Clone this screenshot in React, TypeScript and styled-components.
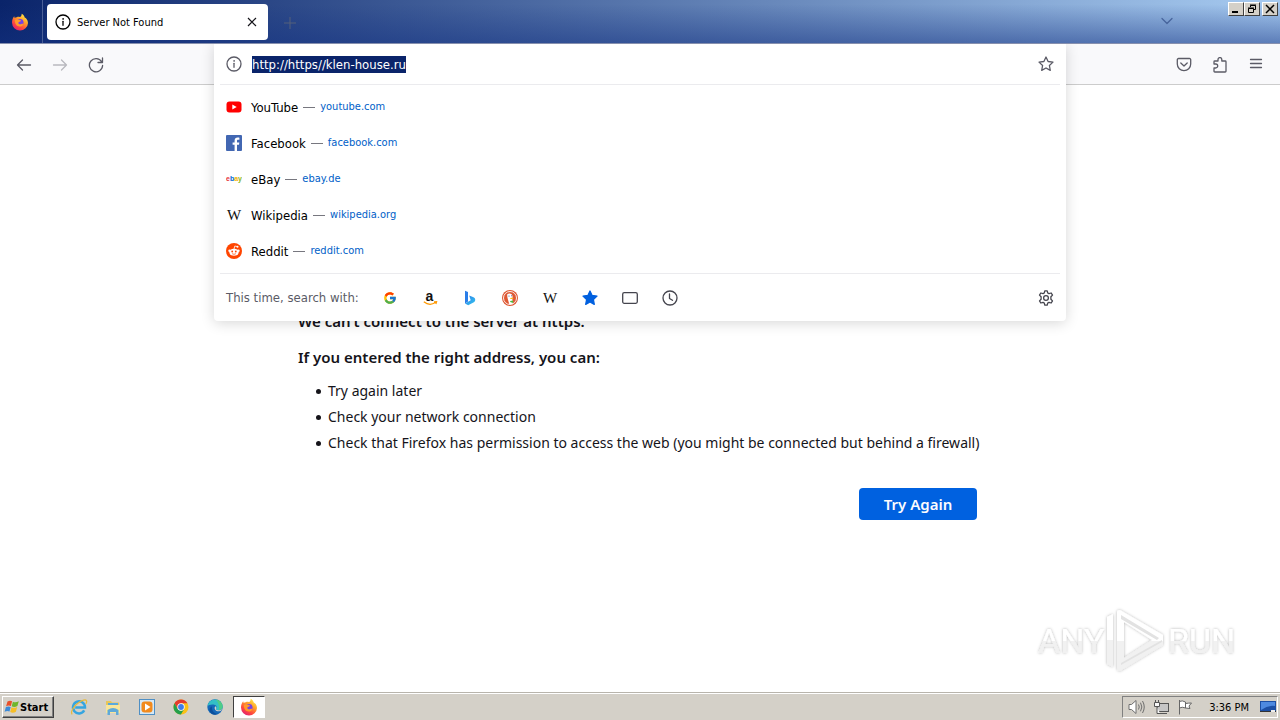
import React, { useEffect, useRef } from 'react';
import styled, { createGlobalStyle } from 'styled-components';
import { FcGoogle } from 'react-icons/fc';

const uiFont = '"DejaVu Sans Condensed", "Noto Sans", sans-serif';
const pageFont = '"Noto Sans", "Open Sans", sans-serif';

const GlobalStyle = createGlobalStyle`
  *, *::before, *::after { box-sizing: border-box; }
  body { margin: 0; background: #fff; font-family: ${uiFont}; color: #15141a; }
  button, input { font-family: inherit; }
  svg { display: block; flex: none; }
  h1, h2, p, ul { margin: 0; padding: 0; font-weight: 400; }
`;

const Screen = styled.div`
  min-height: 100vh;
  display: flex;
  flex-direction: column;
`;

const TitleBar = styled.header`
  height: 44px;
  display: flex;
  align-items: flex-start;
  border-bottom: 1px solid #8790ae;
  background:
    linear-gradient(to bottom, rgba(10, 36, 106, 0) 10%, rgba(20, 50, 130, 0.5) 100%),
    linear-gradient(to right, #0a246a 0%, #a6caf0 100%);
`;

const FirefoxView = styled.button`
  width: 43px;
  height: 43px;
  padding: 0 3px 0 0;
  border: 0;
  border-right: 1px solid #4a5f97;
  background: none;
  display: grid;
  place-items: center;
`;

const Tab = styled.div`
  width: 221px;
  height: 36px;
  margin: 4px 0 0 4px;
  padding: 0 8px;
  border-radius: 4px;
  background: #fff;
  display: flex;
  align-items: center;
  gap: 6px;
  font-size: 11px;
  color: #000;
`;

const TabTitle = styled.span`
  flex: 1;
`;

const PlainButton = styled.button<{ $size: number }>`
  width: ${(p) => p.$size}px;
  height: ${(p) => p.$size}px;
  padding: 0;
  border: 0;
  background: none;
  color: #5b5b66;
  display: grid;
  place-items: center;
  flex: none;
`;

const NewTab = styled(PlainButton)`
  margin: 6px auto 0 5px;
`;

const TabList = styled(PlainButton)`
  margin: 5px 45px 0 0;
  color: #48659c;
`;

const WindowButtons = styled.div`
  display: flex;
  padding: 2px 2px 0 0;
`;

const WindowButton = styled.button<{ $gap?: boolean }>`
  width: 16px;
  height: 14px;
  margin-left: ${(p) => (p.$gap ? 2 : 0)}px;
  padding: 0;
  border: 1px solid;
  border-color: #fff #404040 #404040 #fff;
  background: #d4d0c8;
  display: grid;
  place-items: center;
`;

const Toolbar = styled.div`
  height: 41px;
  display: grid;
  grid-template-columns: 214px 1fr 214px;
  background: #f9f9fb;
  border-bottom: 1px solid #ccc;
`;

const ToolGroup = styled.div<{ $end?: boolean }>`
  display: flex;
  align-items: center;
  justify-content: ${(p) => (p.$end ? 'flex-end' : 'flex-start')};
  gap: 4px;
  padding: 1px 8px 0;
`;

const AddressArea = styled.div`
  position: relative;
`;

const AddressPanel = styled.div`
  position: absolute;
  z-index: 2;
  top: 0;
  left: 0;
  right: 0;
  padding: 0 6px;
  border-radius: 0 0 4px 4px;
  background: #fff;
  box-shadow: 0 2px 14px rgba(0, 0, 0, 0.16);
  clip-path: inset(0 -20px -20px -20px);
`;

const AddressRow = styled.form`
  height: 41px;
  padding: 0 6px;
  display: flex;
  align-items: center;
  gap: 10px;
  border-bottom: 1px solid #ebebee;
  color: #5b5b66;
`;

const AddressInput = styled.input`
  flex: 1;
  min-width: 0;
  height: 17px;
  padding: 0;
  border: 0;
  outline: 0;
  background: none;
  font-size: 13px;
  line-height: 17px;
  color: #15141a;
  &::selection { background: #0a246a; color: #fff; }
`;

const Suggestions = styled.ul`
  list-style: none;
  && { padding: 4px 0; }
`;

const Suggestion = styled.li`
  height: 36px;
  padding: 0 6px;
  display: flex;
  align-items: center;
`;

const SiteIcon = styled.span`
  width: 16px;
  margin-right: 9px;
`;

const SiteLink = styled.a`
  display: flex;
  align-items: center;
  gap: 5px;
  font-size: 13px;
  color: #000;
  text-decoration: none;
`;

const Dash = styled.span`
  width: 12px;
  height: 1px;
  background: #77777f;
`;

const SiteUrl = styled.span`
  font-size: 11px;
  line-height: 16px;
  color: #0060c8;
`;

const EngineBar = styled.div`
  height: 48px;
  padding: 0 0 0 6px;
  display: flex;
  align-items: center;
  border-top: 1px solid #ebebee;
`;

const EngineLabel = styled.span`
  width: 144px;
  font-size: 13px;
  color: #5b5b66;
  white-space: nowrap;
`;

const EngineButton = styled(PlainButton)`
  color: #45454e;
`;

const SettingsButton = styled(PlainButton)`
  margin-left: auto;
  color: #45454e;
`;

const Content = styled.main`
  flex: 1;
  position: relative;
  padding: 224px 16px 0;
  font-family: ${pageFont};
`;

const ErrorBlock = styled.section`
  max-width: 684px;
  margin: 0 auto;
  display: flex;
  flex-direction: column;
`;

const Lead = styled.p`
  && { font-weight: 600; }
  font-size: 15px;
  line-height: 24px;
  margin-bottom: 12px;
`;

const Tips = styled.ul`
  && { margin-top: -3px; padding-left: 18px; }
  list-style: none;
  font-size: 14px;
  line-height: 26px;
`;

const Tip = styled.li`
  display: flex;
  align-items: center;
  gap: 7px;
  white-space: nowrap;
  &::before {
    content: '';
    width: 5px;
    height: 5px;
    border-radius: 50%;
    background: #15141a;
  }
`;

const TryAgain = styled.button`
  width: 118px;
  height: 32px;
  margin: 32px 5px 0 auto;
  padding: 0;
  border: 0;
  border-radius: 4px;
  background: #0061e0;
  color: #fbfbfe;
  font-size: 15px;
  font-weight: 600;
`;

const Watermark = styled.div`
  position: absolute;
  right: 40px;
  bottom: 16px;
`;

const Taskbar = styled.footer`
  height: 28px;
  padding: 1px 2px 0;
  border-top: 1px solid #b8b4ac;
  box-shadow: inset 0 1px #fff;
  background: #d4d0c8;
  display: flex;
  align-items: center;
`;

const StartButton = styled.button`
  width: 52px;
  height: 22px;
  padding: 0 0 0 1px;
  border: 1px solid;
  border-color: #fff #404040 #404040 #fff;
  box-shadow: inset -1px -1px #808080;
  background: #d4d0c8;
  color: #000;
  display: flex;
  align-items: center;
  font-size: 11px;
  font-weight: 700;
`;

const QuickLaunch = styled.nav`
  display: flex;
  gap: 2px;
  padding-left: 9px;
`;

const TaskButton = styled.button<{ $active?: boolean }>`
  width: 32px;
  height: 22px;
  padding: 0;
  border: 1px solid;
  border-color: ${(p) => (p.$active ? '#404040 #fff #fff #404040' : 'transparent')};
  background: ${(p) => (p.$active ? '#fff' : 'none')};
  display: grid;
  place-items: center;
`;

const Tray = styled.div`
  height: 22px;
  margin-left: auto;
  padding: 0 1px 0 5px;
  border: 1px solid;
  border-color: #808080 #fff #fff #808080;
  display: flex;
  align-items: center;
  gap: 8px;
  font-size: 11px;
  color: #000;
`;

const Clock = styled.time`
  margin: 0 3px 0 8px;
  white-space: nowrap;
`;

const stroke = { fill: 'none', stroke: 'currentColor', strokeWidth: 1.3, strokeLinecap: 'round', strokeLinejoin: 'round' } as const;

const InfoIcon = () => (
  <svg width="16" height="16" viewBox="0 0 16 16" {...stroke}>
    <circle cx="8" cy="8" r="7" />
    <path d="M8 7.3v4" />
    <circle cx="8" cy="4.9" r=".5" fill="currentColor" strokeWidth=".6" />
  </svg>
);

const Firefox = ({ size = 18 }: { size?: number }) => (
  <svg width={size} height={size} viewBox="0 0 18 18">
    <defs>
      <linearGradient id="ffBody" x1=".85" y1=".05" x2=".25" y2="1">
        <stop offset="0" stopColor="#fff04f" />
        <stop offset=".35" stopColor="#ffa52a" />
        <stop offset=".7" stopColor="#ff4a3d" />
        <stop offset="1" stopColor="#e01e73" />
      </linearGradient>
    </defs>
    <path fill="url(#ffBody)" d="M10.6.7c2 1 2.8 2.500 3.100 3.700 1 .2 3.300 2.400 3.300 5.500A8 8 0 0 1 9 17.500 8 8 0 0 1 1 9.600C1 7 1.900 4.700 3.200 3.300l.5 1.600c.6-.5 1.400-.7 2.200-.6C7.100 3.200 8.500 4.300 9.200 3.900 10.300 3.200 10.800 2 10.600.7z" />
    <circle cx="9.100" cy="9.300" r="3.400" fill="#7542e5" />
    <path fill="#ff9a2b" d="M3.900 6.900c1.400-1.200 3.300-.8 4.600 0 1.300.1 1.800.5 1.400 1.100-.6.700-2.200.5-2.500 1.500-.2 1.600 1.600 2.300 3 1.600 1.300-.6 2 .1 1.500.8-1.400 2-5.200 2.300-6.900-.4-.9-1.400-1.300-3.100-1.100-4.600z" />
  </svg>
);

const YouTube = () => (
  <svg width="16" height="16" viewBox="0 0 16 16">
    <rect x=".5" y="2.500" width="15" height="11" rx="3" fill="#f00" />
    <path fill="#fff" d="M6.300 5.500v5L10.700 8z" />
  </svg>
);

const Facebook = () => (
  <svg width="16" height="16" viewBox="0 0 16 16">
    <rect width="16" height="16" rx="1" fill="#4267b2" />
    <path fill="#fff" d="M8.600 16V9.800H6.600V7.400h2V5.700c0-2 1.200-3.100 3-3.100.9 0 1.600.1 1.800.1v2.100h-1.200c-1 0-1.200.5-1.200 1.100v1.500h2.300l-.3 2.400h-2V16z" />
  </svg>
);

const Ebay = () => (
  <svg width="16" height="16" viewBox="0 0 16 16" fontFamily="Liberation Sans, sans-serif" fontSize="7" fontWeight="700">
    <text x="0" y="10">
      <tspan fill="#e53238">e</tspan><tspan fill="#0064d2">b</tspan><tspan fill="#f5af02">a</tspan><tspan fill="#86b817">y</tspan>
    </text>
  </svg>
);

const Wikipedia = () => (
  <svg width="16" height="16" viewBox="0 0 16 16">
    <text x="8" y="13" textAnchor="middle" fontFamily="Liberation Serif, serif" fontSize="15" fill="#111">W</text>
  </svg>
);

const Reddit = () => (
  <svg width="16" height="16" viewBox="0 0 16 16">
    <circle cx="8" cy="8" r="8" fill="#ff4500" />
    <path d="M8 6l.8-3 2.300.5" fill="none" stroke="#fff" strokeWidth=".8" />
    <circle cx="11.500" cy="3.700" r="1" fill="#fff" />
    <circle cx="3.600" cy="7.700" r="1.300" fill="#fff" />
    <circle cx="12.400" cy="7.700" r="1.300" fill="#fff" />
    <ellipse cx="8" cy="9.300" rx="4.600" ry="3.500" fill="#fff" />
    <circle cx="6.200" cy="8.500" r=".9" fill="#ff4500" />
    <circle cx="9.800" cy="8.500" r=".9" fill="#ff4500" />
    <path d="M6.100 10.700q1.900 1.200 3.800 0" fill="none" stroke="#ff4500" strokeWidth=".7" />
  </svg>
);

const Amazon = () => (
  <svg width="16" height="20" viewBox="0 -4 16 20">
    <text x="7.500" y="8.500" textAnchor="middle" fontFamily="Liberation Sans, sans-serif" fontSize="14" fontWeight="700" fill="#111">a</text>
    <path d="M1.800 9.800c3.600 2.900 8.300 2.900 11.600.8M12 9.800l2.600-.1-.7 2.300" fill="none" stroke="#f90" strokeWidth="1.200" />
  </svg>
);

const Bing = () => (
  <svg width="16" height="16" viewBox="0 0 16 16">
    <defs>
      <linearGradient id="bing" x1="0" y1="0" x2="1" y2="1">
        <stop offset="0" stopColor="#2b7be9" />
        <stop offset="1" stopColor="#35c6ee" />
      </linearGradient>
    </defs>
    <path fill="#2a7de8" d="M3 .8l3 1.100v9.600L3 13.600z" />
    <path fill="url(#bing)" d="M7.200 5.400l4.300 1.900c2.300 1.100 2.200 3.900.4 5L6.200 15.200 3 13.500l5.700-3.300z" />
  </svg>
);

const DuckDuckGo = () => (
  <svg width="16" height="16" viewBox="0 0 16 16">
    <circle cx="8" cy="8" r="8" fill="#de5833" />
    <circle cx="8" cy="8" r="6.500" fill="#de5833" stroke="#fff" strokeWidth=".9" />
    <path fill="#fff" d="M5.300 4.300C6.600 2.900 10 3 10.500 6.100c.2 1.700-.3 2.700 0 4.200l.7 3.300c-1.300.6-2.800.7-4 .3C6.600 11.200 4.700 6.900 5.300 4.300z" />
    <path fill="#fdb813" d="M8.300 8.100c1-.5 2.500-.5 3.300-.2-.5.8-2.100 1.100-3.300 1z" />
    <path fill="#4cba3c" d="M8.200 11l2.900-.6v2.500L8.200 12z" />
    <circle cx="7" cy="6" r=".6" fill="#2d4f8e" />
    <circle cx="9.500" cy="5.800" r=".5" fill="#2d4f8e" />
  </svg>
);

const starPath = 'M8 1l2.100 4.500 4.900.6-3.600 3.400.9 4.900L8 12l-4.300 2.400.9-4.900L1 6.100l4.900-.6z';

const Star = ({ filled }: { filled?: boolean }) => (
  <svg width="16" height="16" viewBox="0 0 16 16" {...stroke} {...(filled ? { fill: '#0060df', stroke: '#0060df' } : {})}>
    <path d={starPath} />
  </svg>
);

const TabsIcon = () => (
  <svg width="16" height="16" viewBox="0 0 16 16" {...stroke}><rect x=".7" y="2.700" width="14.600" height="10.600" rx="1.500" /></svg>
);

const HistoryIcon = () => (
  <svg width="16" height="16" viewBox="0 0 16 16" {...stroke}><circle cx="8" cy="8" r="7" /><path d="M7.500 4v4.500l3 1.800" /></svg>
);

const Gear = () => (
  <svg width="16" height="16" viewBox="0 0 16 16" {...stroke}>
    <circle cx="8" cy="8" r="2.400" />
    <path d="M6.800.8h2.400l.5 2.100 1.300.8 2.200-.7 1.300 2.100-1.600 1.700v2.400l1.600 1.700-1.300 2.100-2.200-.7-1.300.8-.5 2.100H6.800l-.5-2.100-1.300-.8-2.200.7-1.300-2.100 1.600-1.700V6.800L1.500 5.100 2.800 3l2.200.7 1.300-.8z" />
  </svg>
);

const Arrow = ({ forward }: { forward?: boolean }) => (
  <svg width="16" height="16" viewBox="0 0 16 16" {...stroke} opacity={forward ? 0.4 : 1}>
    <path d={forward ? 'M1.500 8h13M9.500 3L14.500 8l-5 5' : 'M14.500 8h-13M6.500 3L1.500 8l5 5'} />
  </svg>
);

const Reload = () => (
  <svg width="16" height="16" viewBox="0 0 16 16" {...stroke}>
    <path d="M13.600 4.700A6.600 6.600 0 1 0 14.600 8.500M14.500 1v4.500H10" />
  </svg>
);

const Pocket = () => (
  <svg width="16" height="16" viewBox="0 0 16 16" {...stroke}>
    <path d="M2.500 1.500h11a1.200 1.200 0 0 1 1.200 1.200V7a6.700 6.700 0 0 1-13.400 0V2.700A1.200 1.200 0 0 1 2.500 1.500zM4.800 6L8 9l3.200-3" />
  </svg>
);

const Puzzle = () => (
  <svg width="16" height="16" viewBox="0 0 16 16" {...stroke}>
    <path d="M2 7V4.800A.8.8 0 0 1 2.800 4H6V2.500a1.900 1.900 0 0 1 3.800 0V4h3.400a.8.8 0 0 1 .8.800v9.400a.8.8 0 0 1-.8.800H2.800a.8.8 0 0 1-.8-.8V11h1.700a2 2 0 0 0 0-4z" />
  </svg>
);

const Menu = () => (
  <svg width="16" height="16" viewBox="0 0 16 16" {...stroke}><path d="M2.500 2.500h11M2.500 6.500h11M2.500 10.500h11" /></svg>
);

const StartFlag = () => (
  <svg width="16" height="16" viewBox="0 0 16 16">
    <path fill="#e8502a" d="M3.500 2.500q2.500-1.500 4.600-.2L6.900 7Q4.500 6 2.100 7.300z" />
    <path fill="#6fb62c" d="M8.900 2.700q2.600 1.400 5.900-.5L13.400 7q-3 1.700-5.700.3z" />
    <path fill="#3b8ad8" d="M1.900 8.100q2.500-1.300 4.800-.2l-1.200 4.600q-2.300-1.200-4.900.3z" />
    <path fill="#f6be26" d="M7.500 8.200q2.600 1.400 5.700-.3l-1.300 4.800q-3 1.800-5.700.2z" />
  </svg>
);

const InternetExplorer = () => (
  <svg width="18" height="18" viewBox="0 0 18 18">
    <path d="M14.200 12.400A6 6 0 1 1 15 9.600H5.200" fill="none" stroke="#36a5e0" strokeWidth="2.500" />
    <path d="M2.200 16.300c-2.300-2.400 2.200-9 7-12 3-2 6.500-3.200 7.300-1.600.5 1-.1 2.300-.7 3.200" fill="none" stroke="#e8b93a" strokeWidth="1.200" />
  </svg>
);

const Explorer = () => (
  <svg width="18" height="18" viewBox="0 0 18 18">
    <path fill="#e8c659" d="M2 3h5l1 1.500h7V15H2z" />
    <path fill="#58a9de" d="M4 5h10v4H4z" />
    <path fill="#f8e59a" d="M2 7h14v8H2z" />
    <path fill="#5fa9d8" d="M3.500 12q5.500-4 11 0v5H12v-3H6v3H3.500z" />
  </svg>
);

const MediaPlayer = () => (
  <svg width="18" height="18" viewBox="0 0 18 18">
    <rect x="1.500" y="1.500" width="15" height="15" fill="#d6e8f5" stroke="#4f8fc4" />
    <rect x="3.500" y="3.500" width="11" height="11" rx="3" fill="#f28a1d" />
    <path fill="#fff" d="M7 5.500v7L12.500 9z" />
  </svg>
);

const Chrome = () => (
  <svg width="18" height="18" viewBox="0 0 18 18">
    <circle cx="9" cy="9" r="7.500" fill="#fbc116" />
    <path fill="#e33b2e" d="M2.500 5.200A7.500 7.500 0 0 1 15.500 5.300H9L5.800 10.900z" />
    <path fill="#249f4b" d="M2.500 5.200L5.800 10.900 9 12.700l3.200-1.800-3.300 5.600A7.500 7.500 0 0 1 2.500 5.200z" />
    <circle cx="9" cy="9" r="3.700" fill="#fff" />
    <circle cx="9" cy="9" r="2.900" fill="#3f7de8" />
  </svg>
);

const Edge = () => (
  <svg width="18" height="18" viewBox="0 0 18 18">
    <circle cx="9" cy="9" r="7.700" fill="#1568b8" />
    <path fill="#34bfc6" d="M1.400 8.200A7.700 7.700 0 0 1 16.700 8.500c0 3-2.600 3.700-4.400 3.700-2 0-2.500-.8-2.200-1.400 1.500-2.300-.5-4-2.600-4.200-2.700-.3-5 .6-6.100 1.600z" />
    <path fill="#5bd36c" d="M10 1.400a7.700 7.700 0 0 1 6.700 7.100c0 2.500-2 3.500-3.800 3.700 1-3.500-.2-7.400-2.900-10.800z" opacity=".7" />
    <path fill="#0c4f9c" d="M6 8.500c-.8 3.500 2 7.500 6.500 7.300-3 1.700-8 .9-9-3.300-.3-2 .8-3.500 2.500-4z" />
    <path fill="#d4d0c8" d="M9.200 8.200c1.200.6 1.500 1.700.9 2.600-.3.600.2 1.400 2.200 1.400 1.500 0 3-.3 3.900-1.200-.4 1.200-1.300 2.200-3 2.300-3.300.3-5.700-2.600-4-5.100z" />
  </svg>
);

const Speaker = () => (
  <svg width="17" height="16" viewBox="0 0 17 16" fill="none" stroke="#6e6e6e" strokeLinejoin="round">
    <path fill="#fff" d="M1 5.500h2.500L8 1.500v13l-4.500-4H1z" />
    <path d="M10.500 5.500q1.500 2.500 0 5M12.500 3.700q2.700 4.300 0 8.600M14.500 2q3.500 6 0 12" />
  </svg>
);

const Network = () => (
  <svg width="16" height="16" viewBox="0 0 16 16" fill="#f8f8f8" stroke="#555">
    <rect x="4.500" y="4.500" width="11" height="8" fill="#c6c6c6" />
    <path d="M7 14.500h7" />
    <path d="M1.500 3.500h5v4h-5zM2.500 1v2.500M5.500 1v2.500M4 7.500v7h3" />
  </svg>
);

const Flag = () => (
  <svg width="16" height="16" viewBox="0 0 16 16" fill="#fff" stroke="#666">
    <path d="M2.500 2.500Q5 1 8.500 3v6Q5 7.500 2.500 9zM8.500 4.500q3-.5 6-.5L12 7l1 2.500-4.500-.5M2.500 1v14.500" />
  </svg>
);

const ShowDesktop = () => (
  <svg width="16" height="16" viewBox="0 0 16 16">
    <rect x="0" y="2" width="16" height="10" fill="#1c4fa4" />
    <path fill="#4e8ae0" d="M1 3h14v4Q8 6 1 11z" />
    <path stroke="#333" d="M0 12.500h16" />
    <path fill="#eee" d="M11 11h4v2h-4z" />
  </svg>
);

const AnyRunMark = () => (
  <svg width="206" height="74" viewBox="0 0 206 74" role="img" aria-label="ANY RUN">
    <defs>
      <filter id="markShadow" x="-10%" y="-20%" width="120%" height="140%">
        <feDropShadow dx="0" dy="0" stdDeviation="1.500" floodColor="#000" floodOpacity=".3" />
      </filter>
      <linearGradient id="markFill" x1="0" y1="0" x2="0" y2="1">
        <stop offset=".5" stopColor="#fff" />
        <stop offset=".5" stopColor="#f1f1f1" />
      </linearGradient>
    </defs>
    <g filter="url(#markShadow)" fill="url(#markFill)" fontFamily="Roboto, sans-serif" fontWeight="400" fontSize="34">
      <text x="4" y="51">ANY</text>
      <text x="134" y="51">RUN</text>
      <path fillRule="evenodd" d="M86 8L129 33v10L86 69q-3 0-3-3V10q0-2 3-2zM90 20v36L118 38z" />
      <path d="M73 15l6-3v53l-6-3z" />
      <path fill="#e2e2e2" d="M87 13L125 36l-2 2L87 17zM87 61L128 38v2L87 63z" />
    </g>
  </svg>
);

const sites = [
  { name: 'YouTube', url: 'youtube.com', icon: <YouTube /> },
  { name: 'Facebook', url: 'facebook.com', icon: <Facebook /> },
  { name: 'eBay', url: 'ebay.de', icon: <Ebay /> },
  { name: 'Wikipedia', url: 'wikipedia.org', icon: <Wikipedia /> },
  { name: 'Reddit', url: 'reddit.com', icon: <Reddit /> },
];

const engines = [
  { name: 'Google', icon: <FcGoogle size={14} /> },
  { name: 'Amazon', icon: <Amazon /> },
  { name: 'Bing', icon: <Bing /> },
  { name: 'DuckDuckGo', icon: <DuckDuckGo /> },
  { name: 'Wikipedia', icon: <Wikipedia /> },
  { name: 'Bookmarks', icon: <Star filled /> },
  { name: 'Tabs', icon: <TabsIcon /> },
  { name: 'History', icon: <HistoryIcon /> },
];

const apps = [
  { name: 'Internet Explorer', icon: <InternetExplorer /> },
  { name: 'Windows Explorer', icon: <Explorer /> },
  { name: 'Media Player', icon: <MediaPlayer /> },
  { name: 'Chrome', icon: <Chrome /> },
  { name: 'Edge', icon: <Edge /> },
  { name: 'Firefox', icon: <Firefox />, active: true },
];

export default function App() {
  const address = useRef<HTMLInputElement>(null);
  useEffect(() => {
    address.current?.focus();
    address.current?.select();
  }, []);

  return (
    <Screen>
      <GlobalStyle />
      <TitleBar>
        <FirefoxView aria-label="Firefox View"><Firefox /></FirefoxView>
        <Tab>
          <InfoIcon />
          <TabTitle>Server Not Found</TabTitle>
          <PlainButton $size={16} aria-label="Close tab">
            <svg width="10" height="10" viewBox="0 0 10 10" stroke="#15141a" strokeWidth="1.200"><path d="M1 1l8 8M9 1L1 9" /></svg>
          </PlainButton>
        </Tab>
        <NewTab $size={34} aria-label="New tab">
          <svg width="12" height="12" viewBox="0 0 12 12" stroke="#55607a"><path d="M6 0v12M0 6h12" /></svg>
        </NewTab>
        <TabList $size={32} aria-label="List all tabs">
          <svg width="14" height="8" viewBox="0 0 14 8" {...stroke}><path d="M2 1.500l5 5 5-5" /></svg>
        </TabList>
        <WindowButtons>
          <WindowButton aria-label="Minimize">
            <svg width="10" height="10" viewBox="0 0 10 10"><path d="M1 7h6v2H1z" /></svg>
          </WindowButton>
          <WindowButton aria-label="Restore">
            <svg width="10" height="10" viewBox="0 0 10 10" fill="none" stroke="#000">
              <path d="M3.500 3V1.500h5v4H7M3 1h6M1.500 4.500h5v4h-5zM1 4h6" />
            </svg>
          </WindowButton>
          <WindowButton $gap aria-label="Close">
            <svg width="10" height="10" viewBox="0 0 10 10" stroke="#000" strokeWidth="1.500"><path d="M1 1l8 8M9 1L1 9" /></svg>
          </WindowButton>
        </WindowButtons>
      </TitleBar>

      <Toolbar>
        <ToolGroup>
          <PlainButton $size={32} aria-label="Back"><Arrow /></PlainButton>
          <PlainButton $size={32} aria-label="Forward"><Arrow forward /></PlainButton>
          <PlainButton $size={32} aria-label="Reload"><Reload /></PlainButton>
        </ToolGroup>
        <AddressArea>
          <AddressPanel>
            <AddressRow onSubmit={(e) => e.preventDefault()}>
              <InfoIcon />
              <AddressInput ref={address} aria-label="Address" defaultValue="http://https//klen-house.ru" />
              <PlainButton type="button" $size={16} aria-label="Bookmark this page"><Star /></PlainButton>
            </AddressRow>
            <Suggestions>
              {sites.map((s) => (
                <Suggestion key={s.name}>
                  <SiteIcon>{s.icon}</SiteIcon>
                  <SiteLink href={`https://${s.url}`}>
                    {s.name}
                    <Dash />
                    <SiteUrl>{s.url}</SiteUrl>
                  </SiteLink>
                </Suggestion>
              ))}
            </Suggestions>
            <EngineBar>
              <EngineLabel>This time, search with:</EngineLabel>
              {engines.map((e) => (
                <EngineButton key={e.name} $size={40} aria-label={e.name}>{e.icon}</EngineButton>
              ))}
              <SettingsButton $size={28} aria-label="Search settings"><Gear /></SettingsButton>
            </EngineBar>
          </AddressPanel>
        </AddressArea>
        <ToolGroup $end>
          <PlainButton $size={32} aria-label="Save to Pocket"><Pocket /></PlainButton>
          <PlainButton $size={32} aria-label="Extensions"><Puzzle /></PlainButton>
          <PlainButton $size={32} aria-label="Menu"><Menu /></PlainButton>
        </ToolGroup>
      </Toolbar>

      <Content>
        <ErrorBlock>
          <Lead>We can’t connect to the server at https.</Lead>
          <Lead>If you entered the right address, you can:</Lead>
          <Tips>
            <Tip>Try again later</Tip>
            <Tip>Check your network connection</Tip>
            <Tip>Check that Firefox has permission to access the web (you might be connected but behind a firewall)</Tip>
          </Tips>
          <TryAgain>Try Again</TryAgain>
        </ErrorBlock>
        <Watermark><AnyRunMark /></Watermark>
      </Content>

      <Taskbar>
        <StartButton><StartFlag />Start</StartButton>
        <QuickLaunch aria-label="Taskbar">
          {apps.map((a) => (
            <TaskButton key={a.name} $active={a.active} aria-label={a.name}>{a.icon}</TaskButton>
          ))}
        </QuickLaunch>
        <Tray>
          <Speaker />
          <Network />
          <Flag />
          <Clock>3:36 PM</Clock>
          <ShowDesktop />
        </Tray>
      </Taskbar>
    </Screen>
  );
}
